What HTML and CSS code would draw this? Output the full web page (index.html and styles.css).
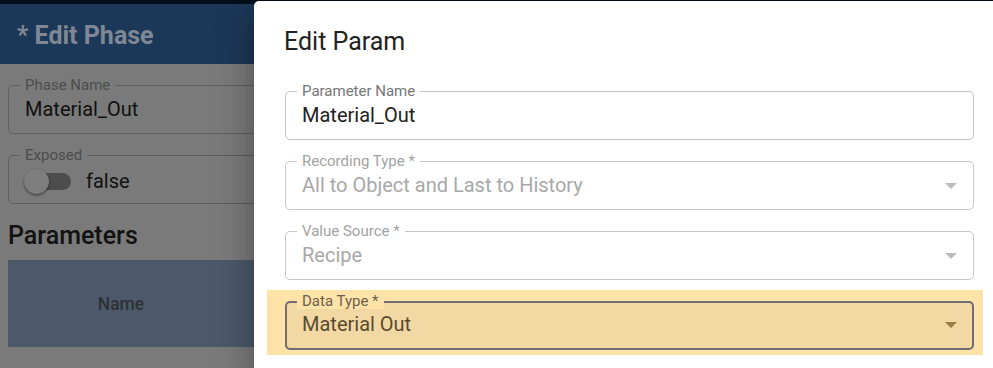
FILE: index.html
```html
<!DOCTYPE html>
<html>
<head>
<meta charset="utf-8">
<link rel="stylesheet" href="styles.css">
</head>
<body>
<div class="page">
  <div class="topbar"></div>
  <header class="phase-header">* Edit Phase</header>
  <div class="phase-body">
    <fieldset class="bg-field">
      <legend>Phase Name</legend>
      <div class="value">Material_Out</div>
    </fieldset>
    <fieldset class="bg-field">
      <legend>Exposed</legend>
      <div class="switch-row">
        <div class="track"><div class="thumb"></div></div>
        <span class="switch-label">false</span>
      </div>
    </fieldset>
    <h2 class="params-title">Parameters</h2>
    <div class="table-head">
      <div class="th">Name</div>
      <div class="th"></div>
    </div>
  </div>
</div>

<aside class="drawer">
  <h1 class="drawer-title">Edit Param</h1>
  <div class="form">
    <fieldset class="field">
      <legend>Parameter Name</legend>
      <div class="value">Material_Out</div>
    </fieldset>
    <fieldset class="field disabled">
      <legend>Recording Type *</legend>
      <div class="value select"><span>All to Object and Last to History</span><svg class="arrow" width="12" height="6" viewBox="0 0 12 6"><path d="M0 0h12L6 6z"/></svg></div>
    </fieldset>
    <fieldset class="field disabled">
      <legend>Value Source *</legend>
      <div class="value select"><span>Recipe</span><svg class="arrow" width="12" height="6" viewBox="0 0 12 6"><path d="M0 0h12L6 6z"/></svg></div>
    </fieldset>
    <div class="highlight">
      <fieldset class="field focused">
        <legend>Data Type *</legend>
        <div class="value select"><span>Material Out</span><svg class="arrow" width="12" height="6" viewBox="0 0 12 6"><path d="M0 0h12L6 6z"/></svg></div>
      </fieldset>
    </div>
  </div>
</aside>
</body>
</html>
```
FILE: styles.css
```css
* { box-sizing: border-box; }
html, body {
  margin: 0;
  padding: 0;
  width: 993px;
  height: 368px;
  overflow: hidden;
}
body {
  background: #7a7a7a;
  font-family: Roboto, "Noto Sans", sans-serif;
  position: relative;
}

.page {
  width: 993px;
}
.topbar {
  height: 4px;
  background: #030f1b;
}
.phase-header {
  height: 60px;
  background: #1c3858;
  color: #7f8894;
  font-size: 25px;
  font-weight: 700;
  display: flex;
  align-items: center;
  padding: 3px 0 0 17px;
}
.phase-body {
  padding: 14px 8px 0 8px;
  display: flex;
  flex-direction: column;
}

fieldset {
  margin: 0;
  padding: 0 16px;
  border: 1px solid #c4c4c4;
  border-radius: 5px;
  min-width: 0;
}
legend {
  font-size: 15px;
  line-height: 15px;
  padding: 0 5px;
  margin-left: -5px;
}
.value {
  font-size: 20px;
  line-height: 24px;
  height: 40px;
  padding: 4px 0 12px;
}

.bg-field {
  border-color: #5f5f5f;
  margin-bottom: 14px;
}
.bg-field legend { color: #4d4d4d; }
.bg-field .value { color: #101010; }

.switch-row {
  display: flex;
  align-items: center;
  height: 40px;
  padding: 4px 0 8px 4px;
}
.track {
  width: 42px;
  height: 17px;
  border-radius: 9px;
  background: #4d4d4d;
  display: flex;
  align-items: center;
}
.thumb {
  width: 25px;
  height: 25px;
  border-radius: 50%;
  background: #7e7e7e;
  margin-left: -5px;
  box-shadow: 0 1px 2px rgba(0,0,0,0.35), 0 2px 3px rgba(0,0,0,0.18);
}
.switch-label {
  margin-left: 15px;
  font-size: 20px;
  color: #111;
}

.params-title {
  margin: -2px 0 4px;
  font-size: 25px;
  line-height: 40px;
  font-weight: 500;
  color: #121212;
}
.table-head {
  height: 87px;
  background: #4b596a;
  display: flex;
}
.th {
  width: 226px;
  display: flex;
  align-items: center;
  justify-content: center;
  font-size: 17.5px;
  font-weight: 500;
  color: #2f3135;
}

/* drawer */
.drawer {
  position: absolute;
  top: 1px;
  left: 254px;
  right: 0;
  bottom: 0;
  background: #fff;
  border-top-left-radius: 5px;
  padding: 21px 19px 0 31px;
  box-shadow: 0 10px 13px -6px rgba(0,0,0,.2), 0 20px 30px 3px rgba(0,0,0,.14), 0 8px 38px 7px rgba(0,0,0,.12);
}
.drawer-title {
  margin: 0 0 22px;
  font-size: 25px;
  line-height: 40px;
  font-weight: 400;
  color: #222;
  text-indent: -1px;
}
.form {
  display: flex;
  flex-direction: column;
  gap: 14px;
}
.field legend { color: #767676; }
.field .value { color: #212121; }
.select {
  display: flex;
  align-items: center;
  justify-content: space-between;
}
.arrow {
  margin-right: 0;
  margin-top: 2px;
  fill: #bdbdbd;
}
.field.disabled { border-color: #c8c8c8; }
.field.disabled legend { color: #a2a2a2; }
.field.disabled .value { color: #a8a8a8; }

.highlight {
  margin: -4px -9px 0 -18px;
  padding: 4px 9px 5px 18px;
  background: #fde3a8;
}
.field.focused {
  background: #f2d9a3;
  border: 2px solid #726b73;
  padding: 0 15px;
}
.field.focused legend { color: #6c5f4e; background: #fde3a8; }
.field.focused .value { color: #5a4a30; height: 39px; padding-top: 3px; }
.field.focused .arrow { fill: #9a7d45; margin-right: 0; }
```
